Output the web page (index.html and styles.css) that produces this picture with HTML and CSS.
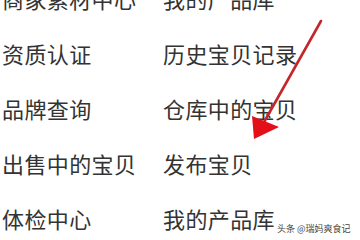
FILE: index.html
```html
<!DOCTYPE html>
<html>
<head>
<meta charset="utf-8">
<link rel="stylesheet" href="styles.css">
</head>
<body>
<div class="page">
  <div class="menu">
    <div class="item">商家素材中心</div><div class="item">我的产品库</div>
    <div class="item">资质认证</div><div class="item">历史宝贝记录</div>
    <div class="item">品牌查询</div><div class="item">仓库中的宝贝</div>
    <div class="item">出售中的宝贝</div><div class="item">发布宝贝</div>
    <div class="item">体检中心</div><div class="item">我的产品库</div>
  </div>
  <svg class="arrow" width="360" height="240" viewBox="0 0 360 240">
    <line x1="321" y1="21" x2="263" y2="124" stroke="#c4272b" stroke-width="2.6" stroke-linecap="round"/>
    <polygon points="252,116 279,127 254,139" fill="#e3101a"/>
  </svg>
  <div class="mark">头条 @瑞妈爽食记</div>
</div>
</body>
</html>
```
FILE: styles.css
```css
html, body {
  margin: 0;
  padding: 0;
  background: #ffffff;
}
.page {
  position: relative;
  width: 360px;
  height: 240px;
  overflow: hidden;
  font-family: "Noto Sans CJK SC", "Noto Sans", sans-serif;
}
.menu {
  display: grid;
  grid-template-columns: 161px 1fr;
  grid-auto-rows: 55px;
  margin-top: -29px;
  padding-left: 2px;
}
.item {
  font-size: 22px;
  line-height: 55px;
  color: #333333;
  letter-spacing: 0.4px;
  white-space: nowrap;
}
.arrow {
  position: absolute;
  left: 0;
  top: 0;
}
.mark {
  position: absolute;
  left: 277px;
  top: 223px;
  font-size: 9px;
  line-height: 12px;
  color: #444;
  text-shadow: 0 0 1px #fff;
  white-space: nowrap;
}
```
